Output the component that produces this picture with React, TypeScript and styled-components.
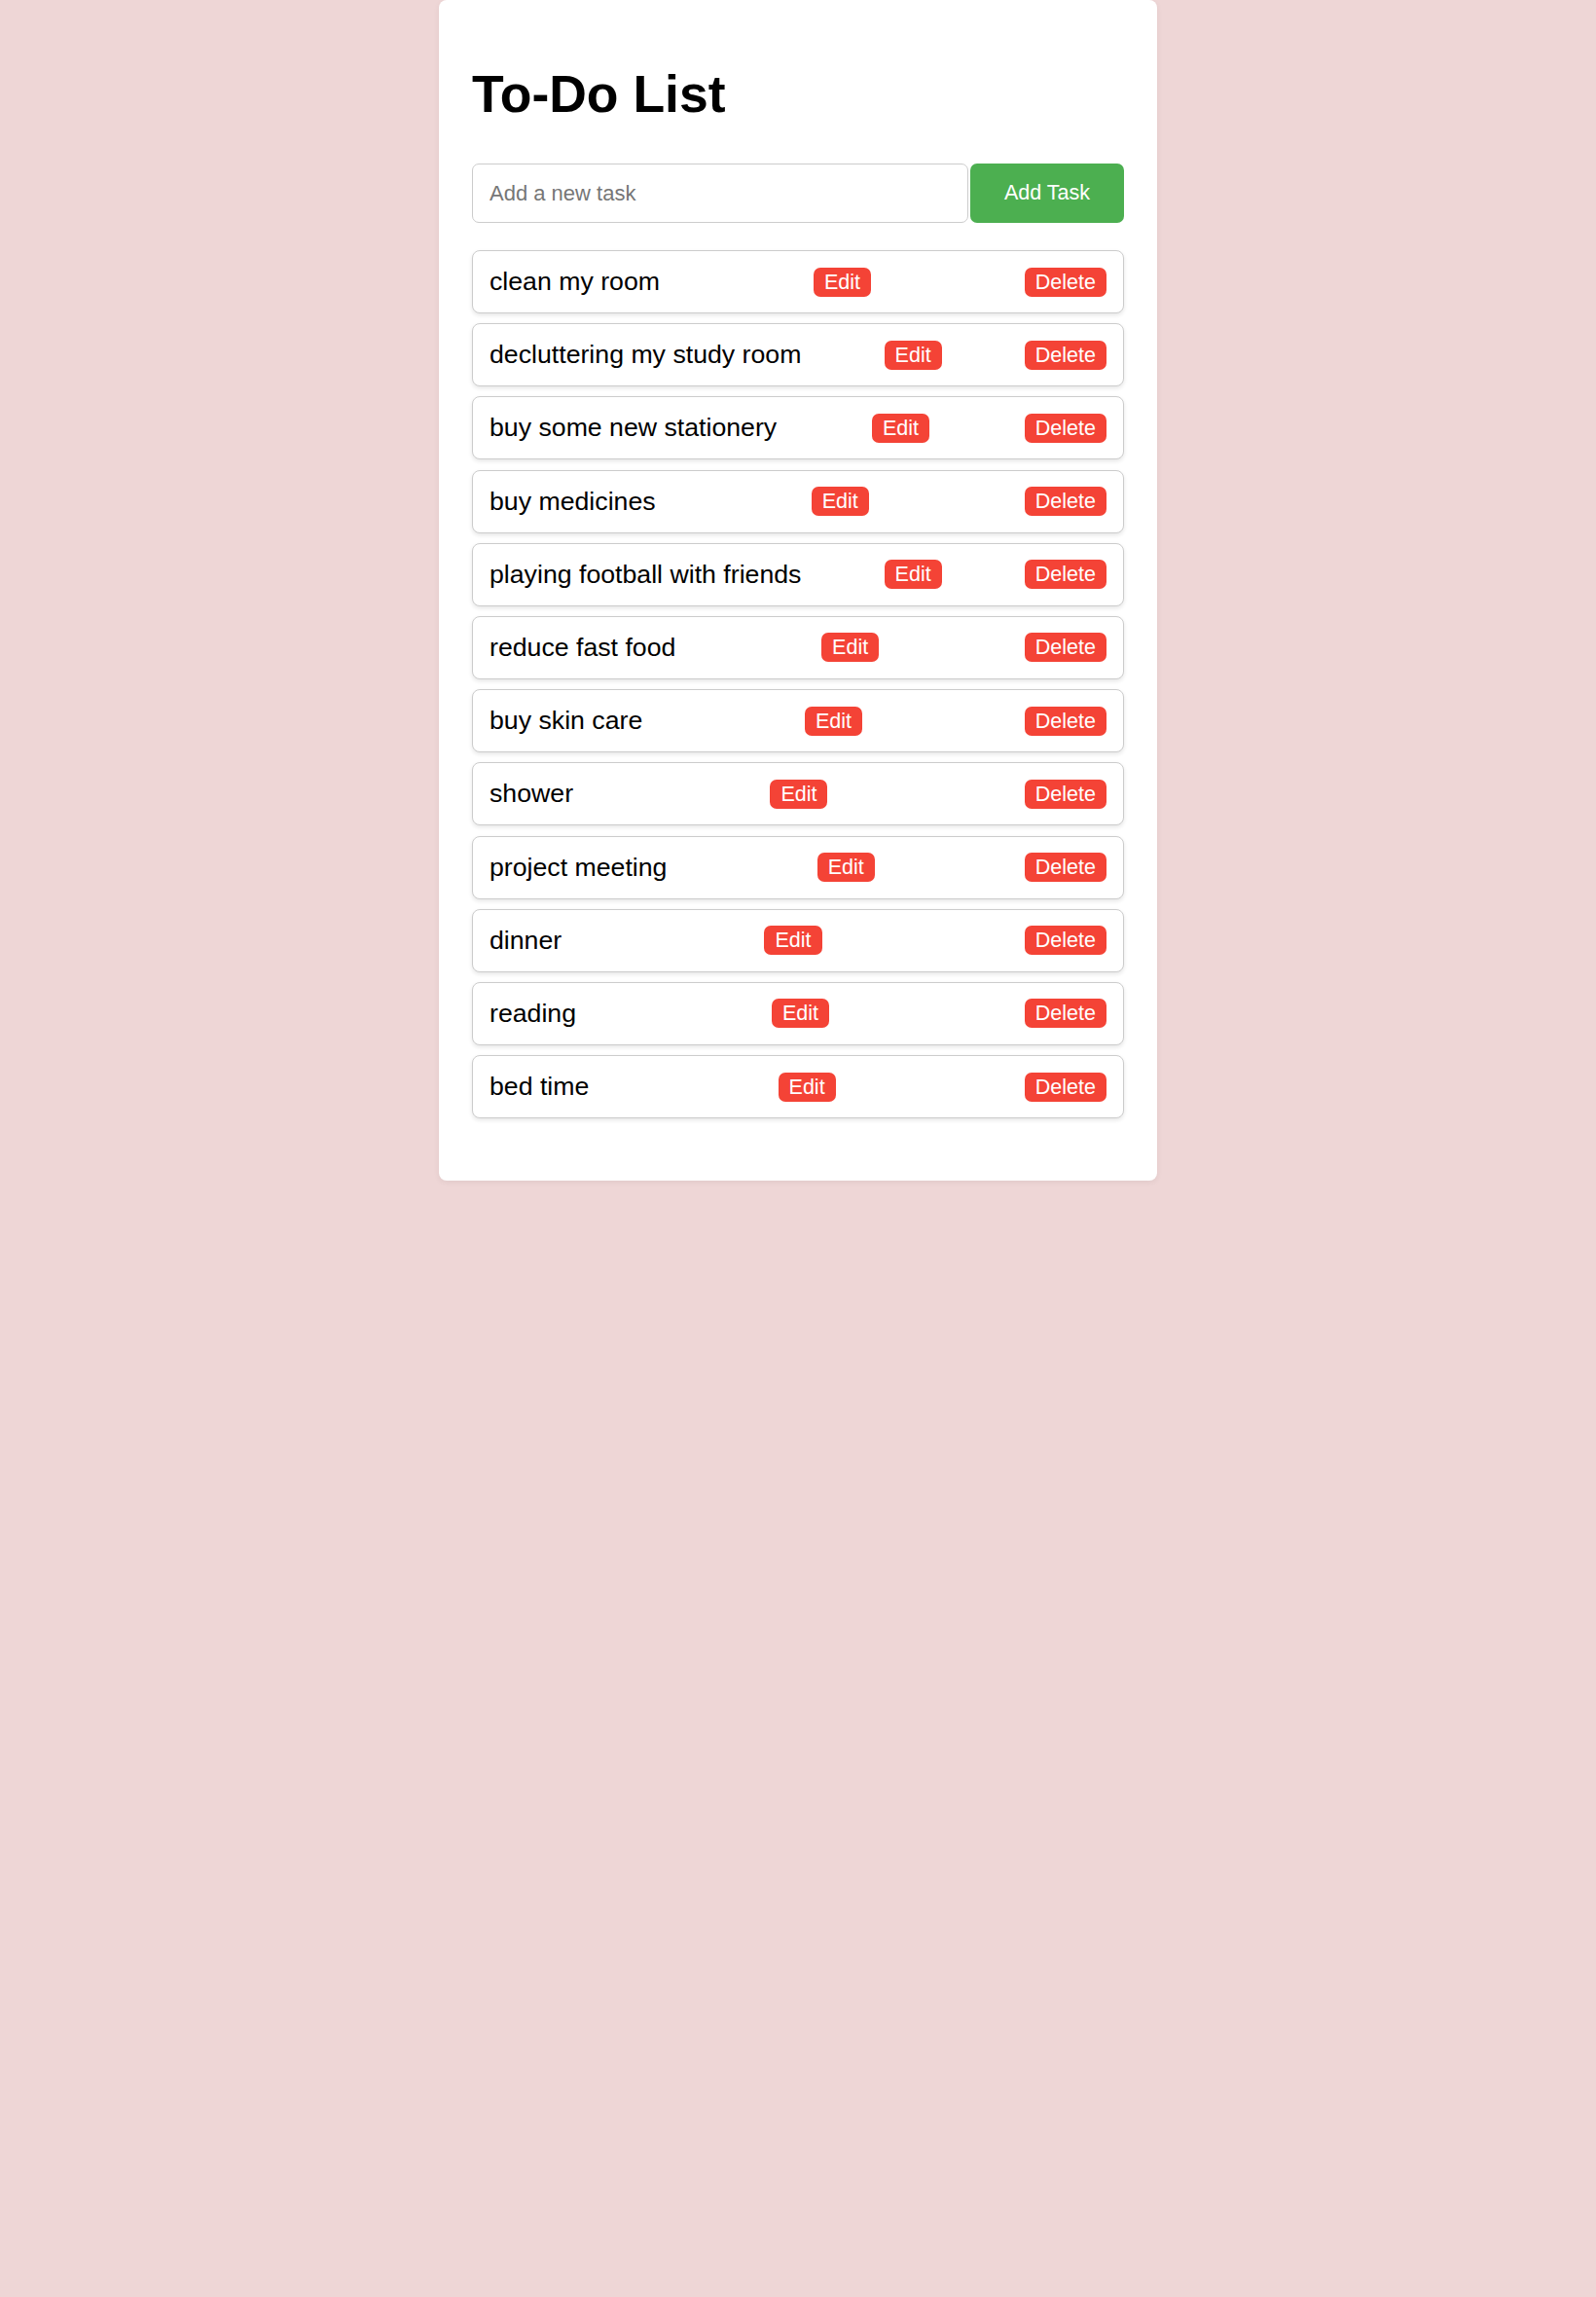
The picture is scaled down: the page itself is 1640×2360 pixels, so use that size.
import { useState } from 'react'
import styled, { createGlobalStyle } from 'styled-components'

const GlobalStyle = createGlobalStyle`
  html, body {
    margin: 0;
    padding: 0;
    background: #eed6d6;
    font-family: "Liberation Sans", Arial, sans-serif;
  }
  #root {
    min-height: 2360px;
  }
`

const Card = styled.div`
  box-sizing: border-box;
  width: 738px;
  margin: 0 auto;
  padding: 34px 34px 37px;
  background: #fff;
  border-radius: 8px;
  box-shadow: 0 2px 6px rgba(0, 0, 0, 0.06);
`

const Title = styled.h1`
  margin: 32px 0 40px;
  font-size: 53.5px;
  font-weight: 700;
  line-height: 62px;
  color: #000;
`

const AddRow = styled.div`
  display: flex;
  gap: 2px;
  height: 61px;
  margin-bottom: 28px;
`

const TaskInput = styled.input`
  flex: 1;
  box-sizing: border-box;
  height: 100%;
  padding: 0 17px;
  font-family: inherit;
  font-size: 22px;
  color: #333;
  border: 1.5px solid #ccc;
  border-radius: 7px;
  outline: none;

  &::placeholder {
    color: #767676;
  }
`

const AddButton = styled.button`
  width: 158px;
  height: 100%;
  font-family: inherit;
  font-size: 21.5px;
  color: #fff;
  background: #4caf50;
  border: none;
  border-radius: 7px;
  cursor: pointer;
`

const List = styled.ul`
  display: flex;
  flex-direction: column;
  gap: 10.2px;
  margin: 0 0 27px;
  padding: 0;
  list-style: none;
`

const Item = styled.li`
  display: flex;
  justify-content: space-between;
  align-items: center;
  box-sizing: border-box;
  height: 65px;
  padding: 0 17px;
  background: #fff;
  border: 1.5px solid #ccc;
  border-radius: 8px;
  box-shadow: 0 2px 4px rgba(0, 0, 0, 0.1);
`

const TaskText = styled.span`
  font-size: 26.7px;
  color: #000;
`

const SmallButton = styled.button`
  padding: 2px 11px;
  font-family: inherit;
  font-size: 21.5px;
  line-height: 26px;
  color: #fff;
  background: #f44336;
  border: none;
  border-radius: 7px;
  cursor: pointer;
`

const initialTasks = [
  'clean my room',
  'decluttering my study room',
  'buy some new stationery',
  'buy medicines',
  'playing football with friends',
  'reduce fast food',
  'buy skin care',
  'shower',
  'project meeting',
  'dinner',
  'reading',
  'bed time',
]

export default function App() {
  const [tasks, setTasks] = useState<string[]>(initialTasks)
  const [text, setText] = useState('')

  const addTask = () => {
    if (!text.trim()) return
    setTasks([...tasks, text.trim()])
    setText('')
  }

  return (
    <>
      <GlobalStyle />
      <Card>
        <Title>To-Do List</Title>
        <AddRow>
          <TaskInput
            placeholder="Add a new task"
            value={text}
            onChange={(e) => setText(e.target.value)}
          />
          <AddButton onClick={addTask}>Add Task</AddButton>
        </AddRow>
        <List>
          {tasks.map((task, i) => (
            <Item key={i}>
              <TaskText>{task}</TaskText>
              <SmallButton>Edit</SmallButton>
              <SmallButton onClick={() => setTasks(tasks.filter((_, j) => j !== i))}>Delete</SmallButton>
            </Item>
          ))}
        </List>
      </Card>
    </>
  )
}
